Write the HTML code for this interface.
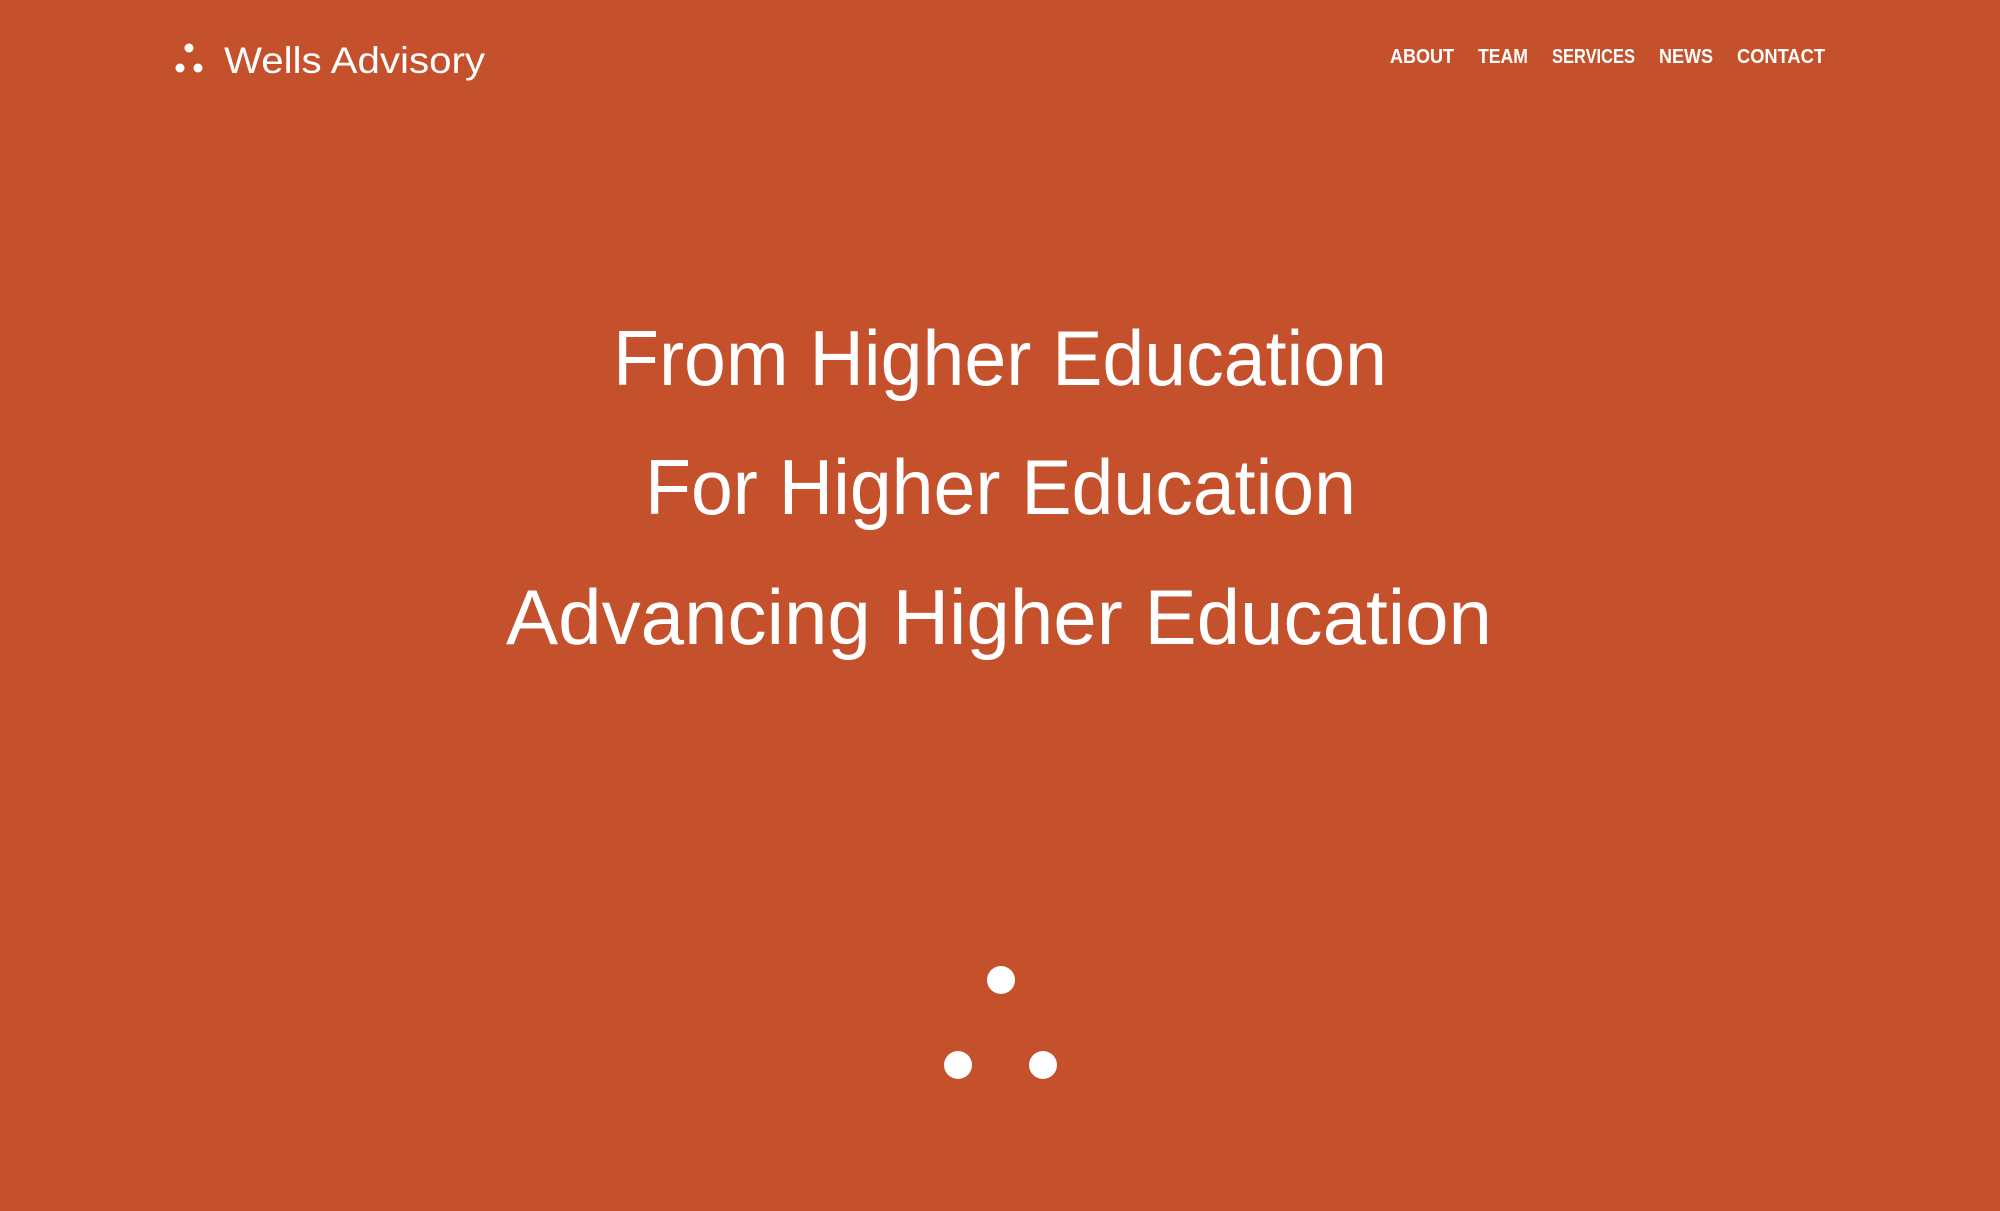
<!DOCTYPE html>
<html><head><meta charset="utf-8"><style>
html,body{margin:0;padding:0;background:#C5502C;width:2000px;height:1211px;overflow:hidden}
svg{display:block}
text{font-family:"Liberation Sans",sans-serif;fill:#fff}
</style></head><body>
<svg width="2000" height="1211" viewBox="0 0 2000 1211" xmlns="http://www.w3.org/2000/svg">
<rect width="2000" height="1211" fill="#C5502C"/>
<circle cx="189" cy="48" r="4.5" fill="#fff"/>
<circle cx="180" cy="68" r="4.5" fill="#fff"/>
<circle cx="198" cy="68" r="4.5" fill="#fff"/>
<text x="224" y="73" font-size="37" textLength="261" lengthAdjust="spacingAndGlyphs">Wells Advisory</text>
<g font-size="20" font-weight="bold">
<text x="1390" y="63" textLength="64" lengthAdjust="spacingAndGlyphs">ABOUT</text>
<text x="1478" y="63" textLength="50" lengthAdjust="spacingAndGlyphs">TEAM</text>
<text x="1552" y="63" textLength="83" lengthAdjust="spacingAndGlyphs">SERVICES</text>
<text x="1659" y="63" textLength="54" lengthAdjust="spacingAndGlyphs">NEWS</text>
<text x="1737" y="63" textLength="88" lengthAdjust="spacingAndGlyphs">CONTACT</text>
</g>
<g font-size="78">
<text x="613" y="385" textLength="774" lengthAdjust="spacingAndGlyphs">From Higher Education</text>
<text x="645" y="514" textLength="711" lengthAdjust="spacingAndGlyphs">For Higher Education</text>
<text x="506" y="644" textLength="986" lengthAdjust="spacingAndGlyphs">Advancing Higher Education</text>
</g>
<circle cx="1001" cy="980" r="14" fill="#fff"/>
<circle cx="958" cy="1065" r="14" fill="#fff"/>
<circle cx="1043" cy="1065" r="14" fill="#fff"/>
</svg>
</body></html>
